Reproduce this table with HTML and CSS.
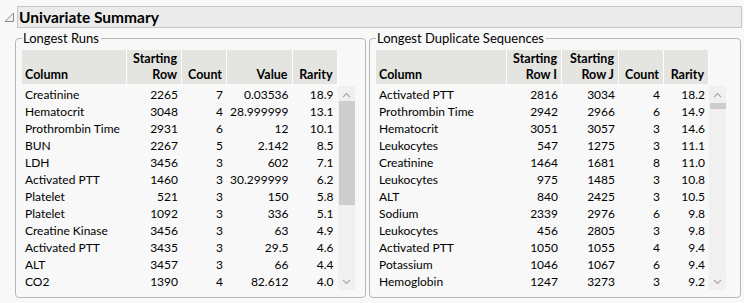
FILE: index.html
```html
<!DOCTYPE html>
<html>
<head>
<meta charset="utf-8">
<link rel="stylesheet" href="styles.css">
</head>
<body>
<div class="report">
  <div class="outline-head">
    <svg class="disclose" width="11" height="11" viewBox="0 0 11 11"><polygon points="1,9.5 9.5,1 9.5,9.5" fill="#f2f2f2" stroke="#8a8a8a" stroke-width="1"/></svg>
    <div class="titlebar">Univariate Summary</div>
  </div>
  <div class="panels">
    <fieldset class="group group-runs">
      <legend>Longest Runs</legend>
      <table class="grid">
        <colgroup><col class="c-name-l"><col class="c-num"><col class="c-cnt"><col class="c-val"><col class="c-cnt"><col class="c-scroll"></colgroup>
        <thead>
          <tr><th class="left">Column</th><th>Starting<br>Row</th><th>Count</th><th>Value</th><th>Rarity</th><th class="blank"></th></tr>
        </thead>
        <tbody>
          <tr><td class="left">Creatinine</td><td>2265</td><td>7</td><td>0.03536</td><td>18.9</td>
            <td class="scroll" rowspan="12"><div class="sb"><span class="arrow"><svg width="9" height="6" viewBox="0 0 9 6"><polyline points="1,5 4.5,1.5 8,5" fill="none" stroke="#a8a8a8" stroke-width="1.1"/></svg></span><div class="track"><div class="thumb thumb-l"></div></div><span class="arrow"><svg width="9" height="6" viewBox="0 0 9 6"><polyline points="1,1 4.5,4.5 8,1" fill="none" stroke="#a8a8a8" stroke-width="1.1"/></svg></span></div></td></tr>
          <tr><td class="left">Hematocrit</td><td>3048</td><td>4</td><td>28.999999</td><td>13.1</td></tr>
          <tr><td class="left">Prothrombin Time</td><td>2931</td><td>6</td><td>12</td><td>10.1</td></tr>
          <tr><td class="left">BUN</td><td>2267</td><td>5</td><td>2.142</td><td>8.5</td></tr>
          <tr><td class="left">LDH</td><td>3456</td><td>3</td><td>602</td><td>7.1</td></tr>
          <tr><td class="left">Activated PTT</td><td>1460</td><td>3</td><td>30.299999</td><td>6.2</td></tr>
          <tr><td class="left">Platelet</td><td>521</td><td>3</td><td>150</td><td>5.8</td></tr>
          <tr><td class="left">Platelet</td><td>1092</td><td>3</td><td>336</td><td>5.1</td></tr>
          <tr><td class="left">Creatine Kinase</td><td>3456</td><td>3</td><td>63</td><td>4.9</td></tr>
          <tr><td class="left">Activated PTT</td><td>3435</td><td>3</td><td>29.5</td><td>4.6</td></tr>
          <tr><td class="left">ALT</td><td>3457</td><td>3</td><td>66</td><td>4.4</td></tr>
          <tr><td class="left">CO2</td><td>1390</td><td>4</td><td>82.612</td><td>4.0</td></tr>
        </tbody>
      </table>
    </fieldset>
    <fieldset class="group group-dups">
      <legend>Longest Duplicate Sequences</legend>
      <table class="grid">
        <colgroup><col class="c-name-r"><col class="c-num"><col class="c-numj"><col class="c-cnt"><col class="c-cnt"><col class="c-scroll"></colgroup>
        <thead>
          <tr><th class="left">Column</th><th>Starting<br>Row I</th><th>Starting<br>Row J</th><th>Count</th><th>Rarity</th><th class="blank"></th></tr>
        </thead>
        <tbody>
          <tr><td class="left">Activated PTT</td><td>2816</td><td>3034</td><td>4</td><td>18.2</td>
            <td class="scroll" rowspan="12"><div class="sb"><span class="arrow"><svg width="9" height="6" viewBox="0 0 9 6"><polyline points="1,5 4.5,1.5 8,5" fill="none" stroke="#a8a8a8" stroke-width="1.1"/></svg></span><div class="track"><div class="thumb thumb-r"></div></div><span class="arrow"><svg width="9" height="6" viewBox="0 0 9 6"><polyline points="1,1 4.5,4.5 8,1" fill="none" stroke="#a8a8a8" stroke-width="1.1"/></svg></span></div></td></tr>
          <tr><td class="left">Prothrombin Time</td><td>2942</td><td>2966</td><td>6</td><td>14.9</td></tr>
          <tr><td class="left">Hematocrit</td><td>3051</td><td>3057</td><td>3</td><td>14.6</td></tr>
          <tr><td class="left">Leukocytes</td><td>547</td><td>1275</td><td>3</td><td>11.1</td></tr>
          <tr><td class="left">Creatinine</td><td>1464</td><td>1681</td><td>8</td><td>11.0</td></tr>
          <tr><td class="left">Leukocytes</td><td>975</td><td>1485</td><td>3</td><td>10.8</td></tr>
          <tr><td class="left">ALT</td><td>840</td><td>2425</td><td>3</td><td>10.5</td></tr>
          <tr><td class="left">Sodium</td><td>2339</td><td>2976</td><td>6</td><td>9.8</td></tr>
          <tr><td class="left">Leukocytes</td><td>456</td><td>2805</td><td>3</td><td>9.8</td></tr>
          <tr><td class="left">Activated PTT</td><td>1050</td><td>1055</td><td>4</td><td>9.4</td></tr>
          <tr><td class="left">Potassium</td><td>1046</td><td>1067</td><td>6</td><td>9.4</td></tr>
          <tr><td class="left">Hemoglobin</td><td>1247</td><td>3273</td><td>3</td><td>9.2</td></tr>
        </tbody>
      </table>
    </fieldset>
  </div>
</div>
</body>
</html>
```
FILE: styles.css
```css
html, body {
  margin: 0;
  padding: 0;
  background: #f8f8f8;
}
body {
  font-family: Lato, "Liberation Sans", sans-serif;
  font-size: 12px;
  color: #000;
}
.report {
  padding-top: 6px;
}
.outline-head {
  display: flex;
  align-items: center;
  height: 22px;
}
.disclose {
  margin-left: 4px;
  margin-right: 2px;
}
.titlebar {
  width: 722px;
  height: 20px;
  border: 1px solid #c6c6c6;
  background: #ebebeb;
  font-weight: bold;
  font-size: 15.5px;
  line-height: 20px;
  padding-left: 1px;
  box-sizing: content-box;
  color: #000;
}
.panels {
  display: flex;
  gap: 3px;
  margin-top: 2px;
  margin-left: 15px;
}
.group {
  margin: 0;
  border: 1px solid #b6b6b6;
  border-radius: 4px;
  padding: 4px 6px 7px 6px;
  min-width: 0;
  box-sizing: border-box;
}
.group-runs { width: 351px; }
.group-dups { width: 372px; }
.group legend {
  padding: 0 2px 0 1px;
  margin: 0;
  font-size: 13px;
  line-height: 16px;
  color: #000;
}
.grid {
  border-collapse: separate;
  border-spacing: 0;
  table-layout: fixed;
}
.c-name-l { width: 105px; }
.c-name-r { width: 131px; }
.c-num { width: 55px; }
.c-numj { width: 57px; }
.c-cnt { width: 45px; }
.c-val { width: 65px; }
.c-scroll { width: 17px; }
.grid th {
  background: #e4e4e0;
  border-right: 1px solid #fdfdfd;
  border-bottom: 2px solid #f8f8f8;
  font-weight: bold;
  text-align: right;
  vertical-align: bottom;
  line-height: 16px;
  padding: 1px 4px 1px 3px;
  font-size: 12.5px;
  white-space: nowrap;
  color: #000;
}
.grid th.left, .grid td.left {
  text-align: left;
  padding-left: 3px;
}
.grid th.blank {
  background: transparent;
  border-right: none;
}
.grid td {
  height: 17px;
  padding: 0 4px 0 3px;
  line-height: 17px;
  text-align: right;
  white-space: nowrap;
  color: #000;
}
.grid td.scroll {
  padding: 0;
  vertical-align: top;
}
.sb {
  display: flex;
  flex-direction: column;
  height: 204px;
  background: #f0f0f0;
}
.arrow {
  height: 17px;
  display: flex;
  align-items: center;
  justify-content: center;
}
.track {
  flex: 1;
}
.thumb {
  background: #cdcdcd;
  margin: 0 0 0 1px;
}
.thumb-l {
  height: 104px;
  margin-top: -2px;
}
.thumb-r {
  height: 6px;
  margin-top: 0;
}
```
